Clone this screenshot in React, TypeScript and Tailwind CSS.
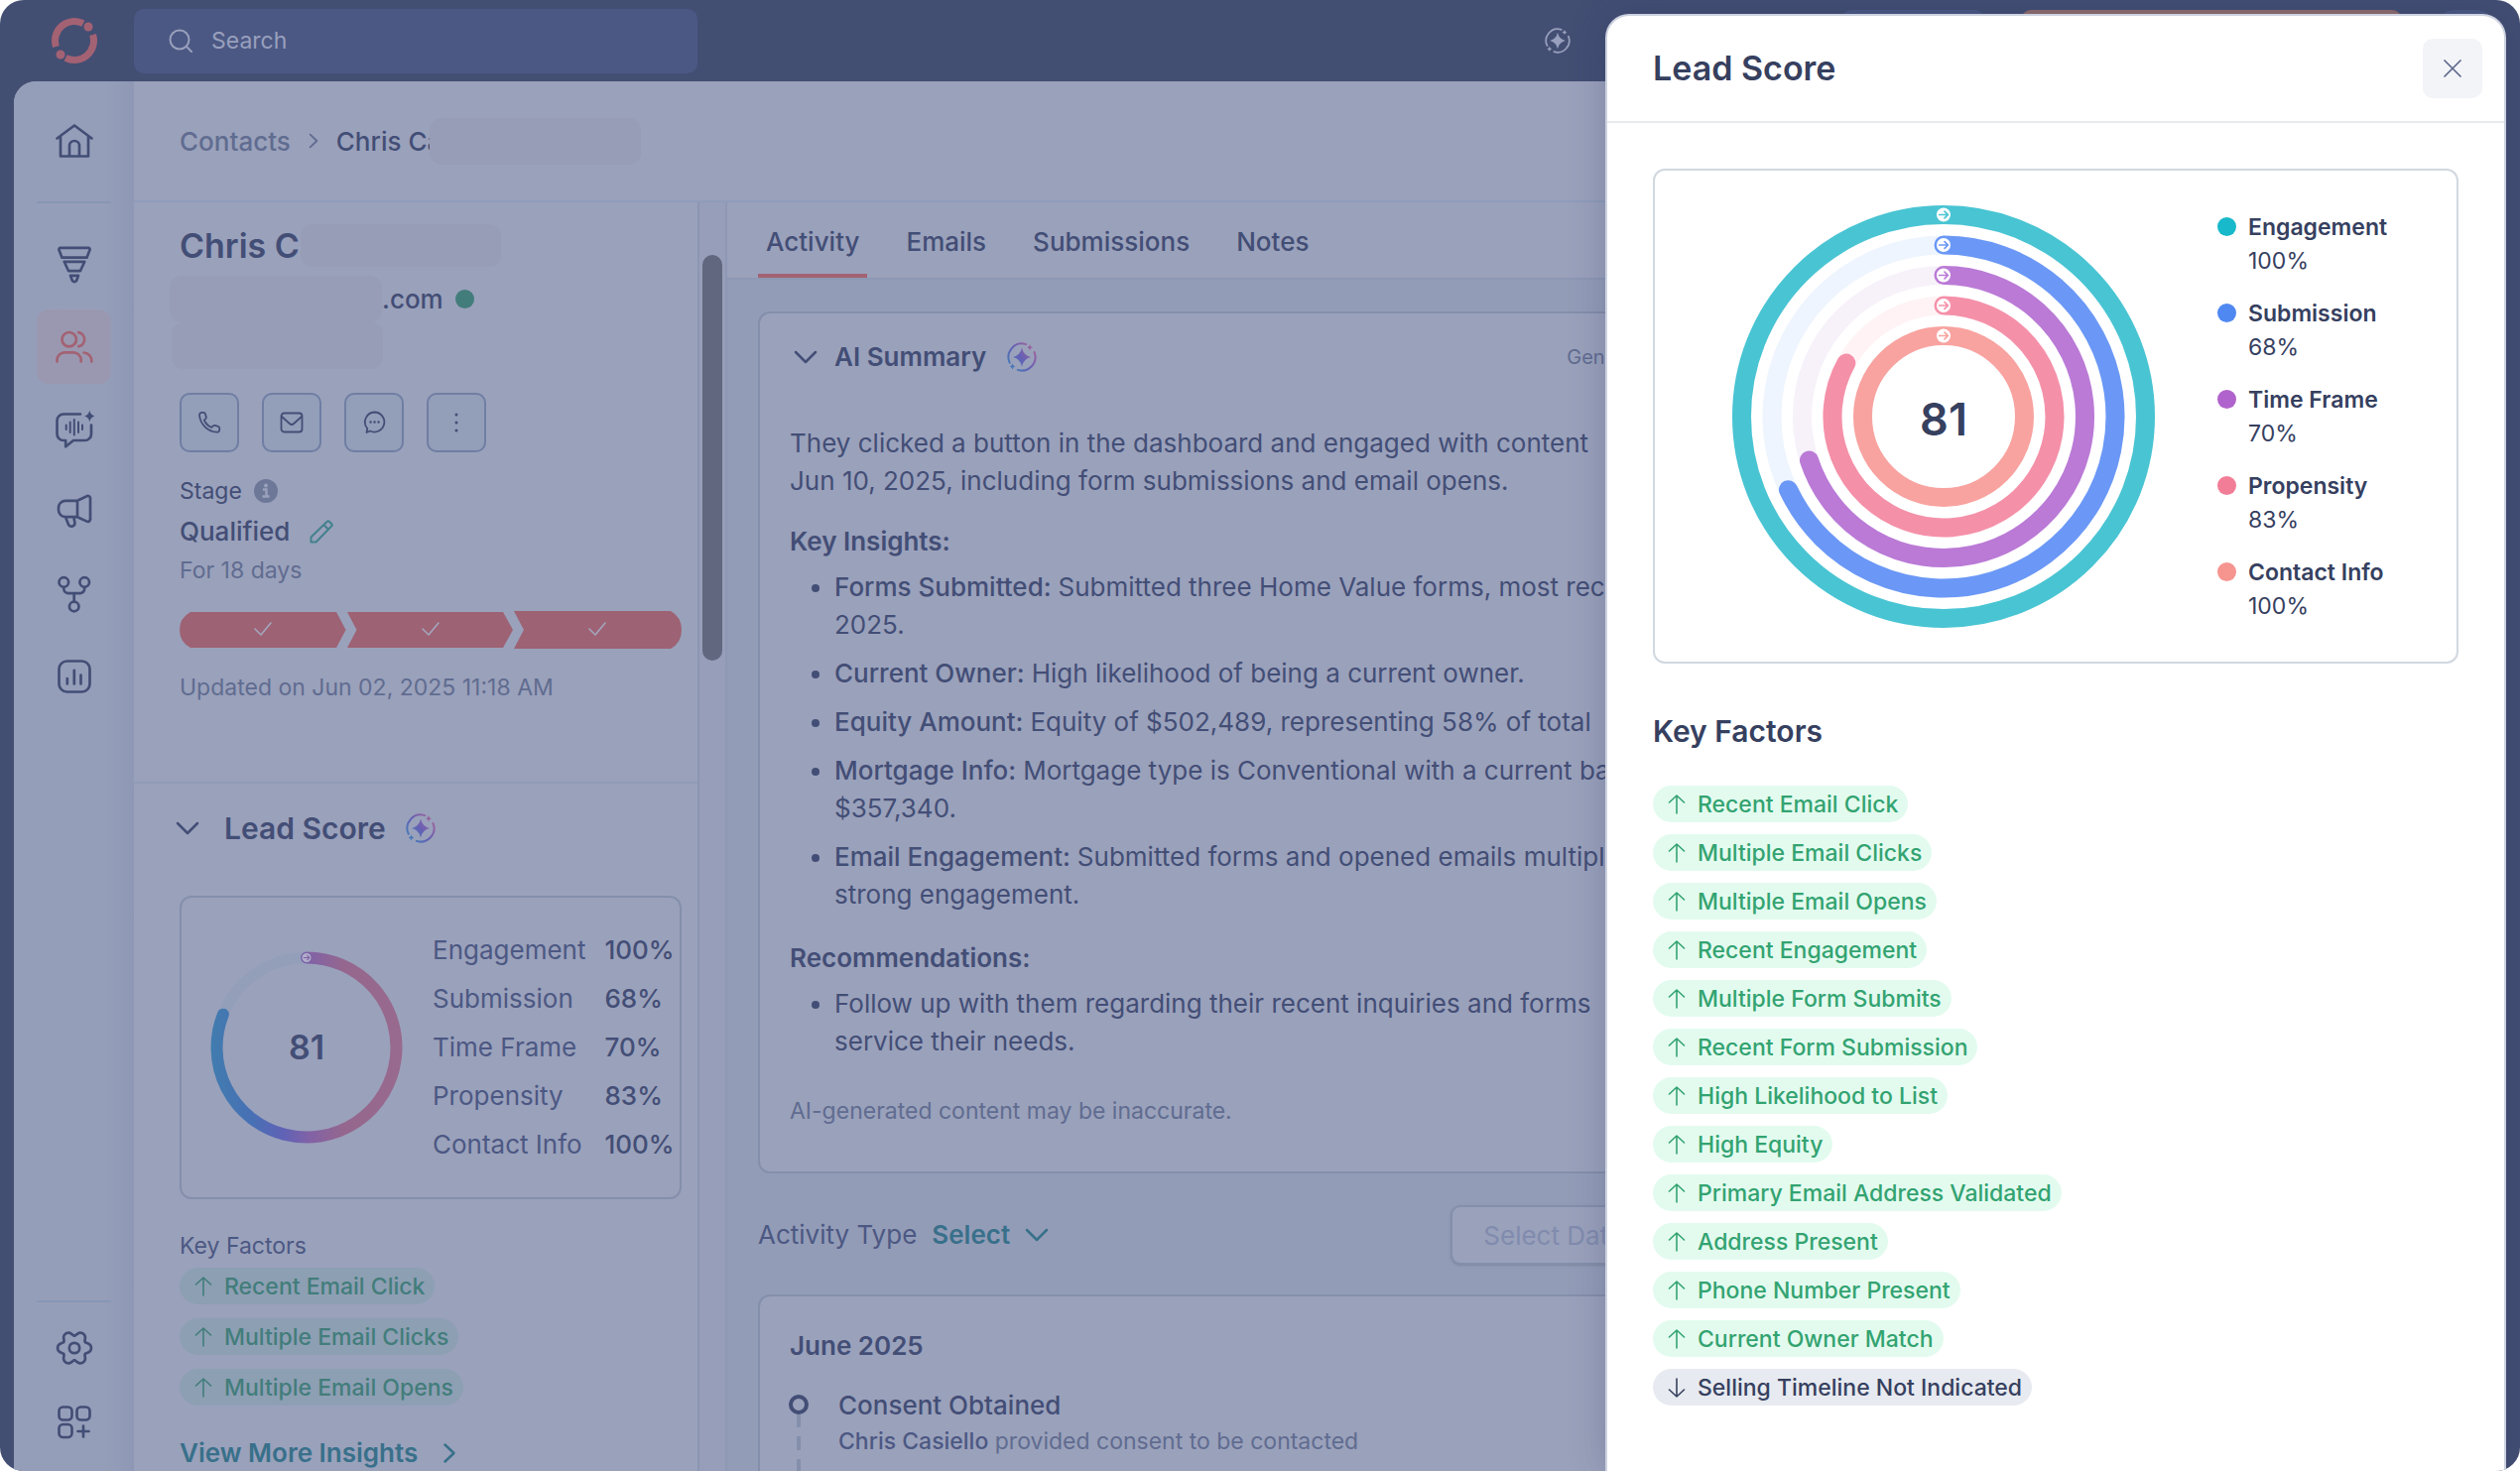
import { ReactNode } from "react";
import clsx from "clsx";

const scores = [
  { label: "Engagement", value: 100, color: "#49c4d3", track: "#e6f8fa", dot: "bg-[#17b9cb]" },
  { label: "Submission", value: 68, color: "#6b98f6", track: "#eff5fe", dot: "bg-[#5088f2]" },
  { label: "Time Frame", value: 70, color: "#ba7ad6", track: "#f7f1fa", dot: "bg-[#b063cc]" },
  { label: "Propensity", value: 83, color: "#f590a9", track: "#fff3f5", dot: "bg-[#f27d97]" },
  { label: "Contact Info", value: 100, color: "#f8a3a0", track: "#fff1f0", dot: "bg-[#f69490]" },
];

const factors = [
  "Recent Email Click",
  "Multiple Email Clicks",
  "Multiple Email Opens",
  "Recent Engagement",
  "Multiple Form Submits",
  "Recent Form Submission",
  "High Likelihood to List",
  "High Equity",
  "Primary Email Address Validated",
  "Address Present",
  "Phone Number Present",
  "Current Owner Match",
];

// Point on a circle, measured clockwise from twelve o'clock.
function polar(c: number, r: number, turn: number) {
  const a = turn * Math.PI * 2;
  return `${(c + r * Math.sin(a)).toFixed(2)} ${(c - r * Math.cos(a)).toFixed(2)}`;
}

function arc(c: number, r: number, from: number, to: number) {
  return `M${polar(c, r, from)}A${r} ${r} 0 ${to - from > 0.5 ? 1 : 0} 1 ${polar(c, r, to)}`;
}

function gearPath() {
  const points = Array.from({ length: 72 }, (_, i) => {
    const a = (i / 72) * Math.PI * 2;
    const r = 15 + 2.3 * Math.cos(6 * a) - 0.4 * Math.cos(12 * a);
    return `${(20 + r * Math.cos(a)).toFixed(2)} ${(20 + r * Math.sin(a)).toFixed(2)}`;
  });
  return `M${points.join("L")}Z`;
}

function NavIcon({ children }: { children: ReactNode }) {
  return (
    <svg
      viewBox="0 0 40 40"
      className="size-10"
      fill="none"
      stroke="currentColor"
      strokeWidth={2.7}
      strokeLinecap="round"
      strokeLinejoin="round"
    >
      {children}
    </svg>
  );
}

const navIcons = {
  home: (
    <NavIcon>
      <path d="M2.5 17.5 20 4.5l17.5 13M6 15.5v20h28v-20M15 35V25a5 5 0 0 1 10 0v10" />
    </NavIcon>
  ),
  funnel: (
    <NavIcon>
      <path d="M6 2.8h28a1.6 1.6 0 0 1 1.5 2.2l-3 7.7h-25l-3-7.700A1.600 1.600 0 0 1 6 2.800zM9.700 16.800h20.600l-4.400 9.400H14.100zM16 30.800h8l-1.800 5q-2.200 2.600-4.400 0z" />
    </NavIcon>
  ),
  users: (
    <NavIcon>
      <circle cx="14.7" cy="12.2" r="7.2" />
      <path d="M24.2 5.2a7.1 7.1 0 0 1 0 14M2.5 34.5V33a7.6 7.6 0 0 1 7.6-7.6h9A7.6 7.6 0 0 1 26.7 33v1.5M29.6 25.5a8.2 8.2 0 0 1 7.7 9" />
    </NavIcon>
  ),
  assistant: (
    <NavIcon>
      <path d="M26 4.5H9A6.5 6.5 0 0 0 2.500 11v13.500A6.500 6.500 0 0 0 9 31h2.200v6.300l7.800-6.300h11.500a6.500 6.500 0 0 0 6.500-6.500V15.500" />
      <path d="M11.7 15.5v4.5M15.7 12.5v10.5M19.8 10v15.500M24 12.500v10.500M28 15.500v4.500" strokeWidth="2" />
      <path d="M35.300.8q1 4.700 5.200 5.700-4.200 1-5.200 5.700-1-4.700-5.200-5.700 4.200-1 5.200-5.700z" fill="currentColor" stroke="none" />
    </NavIcon>
  ),
  campaigns: (
    <NavIcon>
      <path d="M23 8.800H11a7 7 0 0 0-7 7v2.400a7 7 0 0 0 7 7h12zM23 8.800l9.500-4.600A2.400 2.400 0 0 1 36 6.400v21a2.400 2.400 0 0 1-3.500 2.200L23 25.200M11 25.200l3.200 8a3.400 3.400 0 0 0 6.200-2.200l-1-5.500" />
    </NavIcon>
  ),
  workflows: (
    <NavIcon>
      <circle cx="9.3" cy="8" r="4.8" />
      <circle cx="30.2" cy="8" r="4.8" />
      <circle cx="19.7" cy="32.5" r="4.8" />
      <path d="M9.300 13v1.500a4.600 4.600 0 0 0 4.600 4.600h11.700a4.600 4.600 0 0 0 4.600-4.600V13M19.700 19.100v8.500" />
    </NavIcon>
  ),
  reports: (
    <NavIcon>
      <rect x="4.5" y="4.5" width="31" height="31" rx="8" />
      <path d="M12.800 22v5.500M19.800 13.800v13.700M26.500 18.500v9" />
    </NavIcon>
  ),
  settings: (
    <NavIcon>
      <path d={gearPath()} />
      <circle cx="20" cy="20" r="5.2" />
    </NavIcon>
  ),
  apps: (
    <NavIcon>
      <rect x="4.5" y="4.5" width="13" height="13" rx="4" />
      <rect x="22.5" y="4.5" width="13" height="13" rx="4" />
      <rect x="4.5" y="22" width="13" height="13" rx="4" />
      <path d="M29 23.500v11M23.500 29h11" />
    </NavIcon>
  ),
};

function SparkIcon({ id, mono }: { id: string; mono?: boolean }) {
  const paint = mono ? "#98a0bd" : `url(#${id})`;
  return (
    <svg viewBox="0 0 30 30" className={mono ? "size-[26px]" : "size-[30px]"} fill="none">
      <defs>
        <linearGradient id={id} gradientUnits="userSpaceOnUse" x1="2" y1="26" x2="27" y2="5">
          <stop offset="0" stopColor="#417fb8" />
          <stop offset="0.5" stopColor="#6560b5" />
          <stop offset="1" stopColor="#a0659a" />
        </linearGradient>
      </defs>
      <path d={arc(15, 13.5, 0.68, 1.05)} stroke={paint} strokeWidth="2" strokeLinecap="round" />
      <path d={arc(15, 13.5, 0.19, 0.55)} stroke={paint} strokeWidth="2" strokeLinecap="round" />
      <path d="M15 5.500q1.500 7.500 9 9.500-7.500 2-9 9.500-1.500-7.500-9-9.500 7.500-2 9-9.500z" fill={paint} />
      <path d="M23 2.200q.6 2.400 2.800 3-2.200.6-2.800 3-.6-2.400-2.800-3 2.200-.6 2.800-3zM5.500 21.500q.6 2.400 2.800 3-2.200.6-2.800 3-.6-2.400-2.800-3 2.200-.6 2.800-3z" fill={paint} />
    </svg>
  );
}

function Chevron({ className, right }: { className?: string; right?: boolean }) {
  return (
    <svg
      viewBox="0 0 24 24"
      className={clsx("size-6", className)}
      fill="none"
      stroke="currentColor"
      strokeWidth="2.5"
      strokeLinecap="round"
      strokeLinejoin="round"
    >
      <path d={right ? "M7.500 3.500 16.500 12l-9 8.500" : "M2 7l10 10L22 7"} />
    </svg>
  );
}

function NavItem({ label, active, children }: { label: string; active?: boolean; children: ReactNode }) {
  return (
    <a
      href="#"
      aria-label={label}
      className={clsx(
        "flex size-[75px] items-center justify-center rounded-xl",
        active ? "bg-[#9a98b0] text-[#a36273]" : "text-[#434e76]"
      )}
    >
      {children}
    </a>
  );
}

function Sidebar() {
  return (
    <nav className="flex w-[121px] shrink-0 flex-col items-center bg-gradient-to-r from-[#959eb9] from-75% to-[#8e98b4] pt-[22px] pb-3">
      <NavItem label="Home">{navIcons.home}</NavItem>
      <div className="my-6 h-0.5 w-[75px] bg-[#8796b5]" />
      <div className="flex flex-col gap-2">
        <NavItem label="Pipeline">{navIcons.funnel}</NavItem>
        <NavItem label="Contacts" active>{navIcons.users}</NavItem>
        <NavItem label="Assistant">{navIcons.assistant}</NavItem>
        <NavItem label="Campaigns">{navIcons.campaigns}</NavItem>
        <NavItem label="Workflows">{navIcons.workflows}</NavItem>
        <NavItem label="Reports">{navIcons.reports}</NavItem>
      </div>
      <div className="mt-auto h-0.5 w-[75px] bg-[#8796b5]" />
      <div className="mt-2 flex flex-col">
        <NavItem label="Settings">{navIcons.settings}</NavItem>
        <NavItem label="Apps">{navIcons.apps}</NavItem>
      </div>
    </nav>
  );
}

function TopBar() {
  return (
    <header className="relative flex h-[82px] shrink-0 items-center">
      <div className="flex w-[135px] justify-center pl-[15px]">
        <svg viewBox="0 0 48 48" className="size-12" fill="none" stroke="#a36273" strokeWidth="7">
          <path d={arc(24, 19.5, 0.7, 1.075)} />
          <path d={arc(24, 19.5, 0.2, 0.575)} />
          <circle cx="38" cy="10" r="4.5" fill="#a36273" stroke="none" />
          <circle cx="10" cy="38" r="4.5" fill="#a36273" stroke="none" />
        </svg>
      </div>
      <label className="flex h-[65px] w-[568px] items-center gap-[19px] rounded-[10px] bg-[#4c5884] pl-[35px]">
        <svg viewBox="0 0 24 24" className="size-6" fill="none" stroke="#98a0bd" strokeWidth="2" strokeLinecap="round">
          <circle cx="11" cy="11" r="9.5" />
          <path d="m18 18 5 5" />
        </svg>
        <input
          type="search"
          placeholder="Search"
          className="w-96 bg-transparent text-[23px] leading-[30px] outline-none placeholder:text-[#98a0bd]"
        />
      </label>
      <div className="mr-[957px] ml-auto">
        <SparkIcon id="spark-top" mono />
      </div>
      <div className="absolute top-2.5 right-[540px] h-14 w-36 rounded-[10px] bg-[#4c5884]" />
      <div className="absolute top-2.5 right-[119px] h-14 w-[384px] rounded-[10px] bg-[#926d6c]" />
      <div className="absolute top-2.5 right-6 h-14 w-[62px] rounded-[20px] bg-[#4c5884]" />
    </header>
  );
}

function Pill({ children, down, muted }: { children: ReactNode; down?: boolean; muted?: boolean }) {
  return (
    <li
      className={clsx(
        "flex h-[37px] items-center rounded-full pr-2.5 pl-3.5 text-[23px] leading-[30px] font-medium",
        muted && "bg-[#8d9fb3] text-[#427d7b]",
        !muted && !down && "bg-[#e3fbef] text-[#33a371]",
        down && "bg-[#e7eaf0] text-[#36405f]"
      )}
    >
      <svg
        viewBox="0 0 20 20"
        className="mr-[11px] size-5"
        fill="none"
        stroke="currentColor"
        strokeWidth="1.6"
        strokeLinecap="round"
        strokeLinejoin="round"
      >
        <path d={down ? "M10 1v18M2.500 12 10 19l7.500-7" : "M10 19V1M2.500 8 10 1l7.500 7"} />
      </svg>
      {children}
    </li>
  );
}

function ActionButton({ label, children }: { label: string; children: ReactNode }) {
  return (
    <button
      aria-label={label}
      className="flex size-[60px] items-center justify-center rounded-[10px] border-2 border-[#6f7ea3] bg-[#939eb9] text-[#434e76]"
    >
      <svg
        viewBox="0 0 24 24"
        className="size-6"
        fill="none"
        stroke="currentColor"
        strokeWidth="1.8"
        strokeLinecap="round"
        strokeLinejoin="round"
      >
        {children}
      </svg>
    </button>
  );
}

function StageProgress() {
  return (
    <svg viewBox="0 0 506 38" className="mt-[26px] w-full">
      <g fill="#9d6273">
        <path d="M11 1h147l9.500 18-9.500 18H11Q0 31 0 19T11 1z" />
        <path d="M169 1h157l10 18-10 18H169l9.500-18z" />
        <path d="M337 0h158q11 6 11 19t-11 19H337l10-19z" />
      </g>
      <g fill="none" stroke="#a4a6bf" strokeWidth="1.6" strokeLinecap="round" strokeLinejoin="round">
        <path d="m76 18 6 6 10-12" />
        <path d="m245 18 6 6 10-12" />
        <path d="m413 18 6 6 10-12" />
      </g>
    </svg>
  );
}

function StartBadge({ x, y, r, color, fill }: { x: number; y: number; r: number; color: string; fill: string }) {
  const s = r / 7;
  return (
    <g transform={`translate(${x} ${y}) scale(${s})`}>
      <circle r="7" fill={fill} />
      <path
        d="M-4.300 0h8.600M1-3.300 4.500 0 1 3.300"
        fill="none"
        stroke={color}
        strokeWidth="1.7"
        strokeLinecap="round"
        strokeLinejoin="round"
      />
    </g>
  );
}

function ScoreRing() {
  return (
    <svg viewBox="0 0 194 194" className="size-[194px]" fill="none">
      <defs>
        <linearGradient id="score" gradientUnits="userSpaceOnUse" x1="0" y1="0" x2="194" y2="0">
          <stop offset="0" stopColor="#417cae" />
          <stop offset="0.22" stopColor="#4870b5" />
          <stop offset="0.38" stopColor="#6062b6" />
          <stop offset="0.52" stopColor="#8262a5" />
          <stop offset="0.7" stopColor="#95678e" />
          <stop offset="1" stopColor="#986a8e" />
        </linearGradient>
      </defs>
      <circle cx="97" cy="97" r="90.5" stroke="#939fb9" strokeWidth="11" />
      <path d={arc(97, 90.5, 0, 0.81)} stroke="url(#score)" strokeWidth="12" strokeLinecap="round" />
      <StartBadge x={97} y={6.5} r={4.5} color="#8262a5" fill="#b0aecb" />
      <text x="97" y="109" textAnchor="middle" fill="#434e76" className="text-[34px] font-semibold">
        81
      </text>
    </svg>
  );
}

function ContactPanel() {
  return (
    <section className="w-[568px] shrink-0">
      <div className="border-b-2 border-[#919ab7] pt-[22px] pr-4 pb-20 pl-[46px]">
        <div className="flex items-center">
          <h1 className="text-[34px] leading-[42px] font-semibold text-[#434e76]">Chris Ca</h1>
          <div className="relative -ml-[18px] h-[43px] w-[202px] rounded-xl bg-[#979db7]" />
        </div>
        <div className="mt-[9px] -ml-2.5 flex h-[47px] items-center text-[26px] font-medium text-[#434e76]">
          <div className="h-full w-[214px] rounded-xl bg-[#979db7]" />
          .com
          <span className="ml-3 size-[19px] rounded-full bg-[#427d7b]" />
        </div>
        <div className="-ml-2 h-[47px] w-[213px] rounded-xl bg-[#979db7]" />
        <div className="mt-6 flex gap-[23px]">
          <ActionButton label="Call">
            <path d="M2 4.500C2 3 3 1.800 4.500 1.800h1.600c.8 0 1.500.5 1.700 1.300l1 3.200c.2.700 0 1.400-.5 1.900L6.800 9.600a14 14 0 0 0 7.500 7.300l1.500-1.500c.5-.5 1.200-.7 1.900-.5l3.200 1c.8.2 1.300.9 1.300 1.700v1.600c0 1.500-1.200 2.600-2.700 2.500A19 19 0 0 1 2 4.500z" />
          </ActionButton>
          <ActionButton label="Email">
            <rect x="1.5" y="2.5" width="21" height="19" rx="3" />
            <path d="m2 6 7.800 7a3.300 3.300 0 0 0 4.400 0L22 6" />
          </ActionButton>
          <ActionButton label="Message">
            <path d="M12.500 1.500a10 10 0 1 1-4.500 19L4.500 22l.8-4A10 10 0 0 1 12.500 1.500z" />
            <path d="M8.500 11.500h.1M12.500 11.500h.1M16.500 11.500h.1" strokeWidth="2.4" />
          </ActionButton>
          <ActionButton label="More">
            <path d="M12 4v.1M12 12v.1M12 20v.1" strokeWidth="3" />
          </ActionButton>
        </div>
        <div className="mt-6 flex items-center gap-3 text-[23px] leading-[30px] text-[#434e76]">
          Stage
          <svg viewBox="0 0 24 24" className="size-6">
            <circle cx="12" cy="12" r="12" fill="#6d7899" />
            <circle cx="12" cy="6.5" r="1.9" fill="#9aa1bb" />
            <path d="M9 10.500H12.500V17.500M8.500 17.500h7" fill="none" stroke="#9aa1bb" strokeWidth="2.4" />
          </svg>
        </div>
        <div className="mt-[7px] flex items-center gap-5 text-[26px] leading-[38px] font-medium text-[#434e76]">
          Qualified
          <button aria-label="Edit stage" className="text-[#42818d]">
            <svg viewBox="0 0 24 24" className="size-6" fill="none" stroke="currentColor" strokeWidth="2" strokeLinejoin="round">
              <path d="M1.500 22.500v-5L17.800 1.800q1-1 2 0l2.500 2.500q1 1 0 2L6.500 22.500zM14.500 5.200l4.500 4.500" />
            </svg>
          </button>
        </div>
        <p className="mt-[5px] text-[23px] leading-[30px] text-[#606c90]">For 18 days</p>
        <StageProgress />
        <p className="mt-6 text-[23px] leading-[30px] text-[#606c90]">Updated on Jun 02, 2025 11:18 AM</p>
      </div>
      <div className="pt-[25px] pr-4 pl-[46px]">
        <h2 className="-ml-1 flex h-10 items-center text-[30px] font-semibold text-[#434e76]">
          <Chevron className="mr-[25px]" />
          Lead Score
          <span className="ml-5">
            <SparkIcon id="spark-score" />
          </span>
        </h2>
        <div className="mt-12 flex h-[306px] items-center rounded-xl border-2 border-[#848fab] pl-[29px]">
          <ScoreRing />
          <dl className="ml-[30px] grid grid-cols-[auto_auto] gap-x-[19px] gap-y-[11px] text-[26px] leading-[38px]">
            {scores.map(({ label, value }) => (
              <div key={label} className="contents">
                <dt className="whitespace-nowrap text-[#4c5883]">{label}</dt>
                <dd className="font-medium text-[#434e76]">{value}%</dd>
              </div>
            ))}
          </dl>
        </div>
        <h3 className="mt-8 text-[23px] leading-[30px] text-[#4c5883]">Key Factors</h3>
        <ul className="mt-[7px] flex flex-col items-start gap-3.5">
          {factors.slice(0, 3).map((factor) => (
            <Pill key={factor} muted>
              {factor}
            </Pill>
          ))}
        </ul>
        <a href="#" className="mt-[29px] flex items-center gap-5 text-[26px] leading-[38px] font-semibold text-[#38708a]">
          View More Insights
          <Chevron right />
        </a>
      </div>
    </section>
  );
}

function Tab({ active, children }: { active?: boolean; children: ReactNode }) {
  return (
    <button
      role="tab"
      aria-selected={active}
      className={clsx("border-b-4 px-2 pt-1.5", active ? "border-[#a36273]" : "border-transparent")}
    >
      {children}
    </button>
  );
}

function Insight({ title, children }: { title?: string; children: ReactNode }) {
  return (
    <li>
      {title && <strong className="font-medium">{title}: </strong>}
      {children}
    </li>
  );
}

function ActivityPanel() {
  return (
    <main className="min-w-0 flex-1 overflow-hidden border-l-2 border-[#8e98b4] bg-[#939cb7] whitespace-nowrap text-[#434e76]">
      <div role="tablist" className="flex h-[78px] gap-[31px] border-b-2 border-[#8d98b4] bg-[#9aa1bb] pl-[31px] text-[26px] font-medium">
        <Tab active>Activity</Tab>
        <Tab>Emails</Tab>
        <Tab>Submissions</Tab>
        <Tab>Notes</Tab>
      </div>
      <div className="px-[31px] pt-8 text-[26px] leading-[38px]">
        <article className="rounded-xl border-2 border-[#848fab] bg-[#9aa1bb] px-[30px] pt-6 pb-[46px]">
          <div className="flex h-10 items-center">
            <Chevron className="mr-[17px] ml-1" />
            <h2 className="font-semibold">AI Summary</h2>
            <span className="ml-[21px]">
              <SparkIcon id="spark-summary" />
            </span>
            <span className="ml-[534px] text-[20px] text-[#606c90]">Generated</span>
          </div>
          <p className="mt-12">
            They clicked a button in the dashboard and engaged with content
            <br />
            Jun 10, 2025, including form submissions and email opens.
          </p>
          <h3 className="mt-[23px] font-semibold">Key Insights:</h3>
          <ul className="mt-2 flex list-disc flex-col gap-[11px] pl-[45px]">
            <Insight title="Forms Submitted">
              Submitted three Home Value forms, most recent
              <br />
              2025.
            </Insight>
            <Insight title="Current Owner">High likelihood of being a current owner.</Insight>
            <Insight title="Equity Amount">Equity of $502,489, representing 58% of total</Insight>
            <Insight title="Mortgage Info">
              Mortgage type is Conventional with a current balance
              <br />
              $357,340.
            </Insight>
            <Insight title="Email Engagement">
              Submitted forms and opened emails multiple
              <br />
              strong engagement.
            </Insight>
          </ul>
          <h3 className="mt-[26px] font-semibold">Recommendations:</h3>
          <ul className="mt-2 list-disc pl-[45px]">
            <Insight>
              Follow up with them regarding their recent inquiries and forms
              <br />
              service their needs.
            </Insight>
          </ul>
          <p className="mt-9 text-[23px] leading-[30px] text-[#606c90]">AI-generated content may be inaccurate.</p>
        </article>
        <div className="mt-8 flex h-[60px] items-center">
          <label htmlFor="activity-type" className="text-[#4c5883]">
            Activity Type
          </label>
          <div className="relative ml-[15px] flex items-center text-[#38708a]">
            <select id="activity-type" className="w-[122px] appearance-none bg-transparent font-semibold outline-none">
              <option>Select</option>
            </select>
            <Chevron className="pointer-events-none absolute right-1 size-5" />
          </div>
          <input
            aria-label="Select Date"
            placeholder="Select Date"
            className="ml-[401px] h-[60px] w-96 rounded-[10px] border-2 border-[#848fab] bg-[#9aa1bb] pl-[31px] shadow-sm outline-none placeholder:text-[#808bad]"
          />
        </div>
        <article className="mt-[30px] rounded-xl border-2 border-[#848fab] bg-[#9aa1bb] px-[30px] pt-[31px] pb-9">
          <h2 className="font-semibold">June 2025</h2>
          <div className="mt-[22px] flex gap-[31px]">
            <div className="flex w-[18px] shrink-0 flex-col items-center pt-2">
              <span className="size-5 shrink-0 rounded-full border-4 border-[#434e76]" />
              <svg viewBox="0 0 4 70" className="h-[70px] w-1" stroke="#848fab" strokeWidth="4" strokeDasharray="14 9">
                <path d="M2-1v71" />
              </svg>
            </div>
            <div>
              <h3 className="font-medium">Consent Obtained</h3>
              <p className="text-[23px] leading-[34px] text-[#606c90]">
                <span className="font-medium text-[#4c5883]">Chris Casiello</span> provided consent to be contacted
              </p>
            </div>
          </div>
        </article>
      </div>
    </main>
  );
}

function ScoreChart() {
  return (
    <svg viewBox="0 0 426 426" className="size-[426px] shrink-0" fill="none">
      {scores.map(({ label, value, color, track }, i) => {
        const r = 203.5 - i * 30.5;
        return (
          <g key={label} strokeWidth="19">
            <circle cx="213" cy="213" r={r} stroke={value === 100 ? color : track} />
            {value < 100 && <path d={arc(213, r, 0, value / 100)} stroke={color} strokeLinecap="round" />}
            <StartBadge x={213} y={213 - r} r={7} color={color} fill="#fff" />
          </g>
        );
      })}
      <text x="213" y="232" textAnchor="middle" fill="#36405f" className="text-[45px] font-semibold">
        81
      </text>
    </svg>
  );
}

function LeadScoreDrawer() {
  return (
    <aside
      role="dialog"
      aria-label="Lead Score"
      className="absolute top-3.5 right-3.5 bottom-0 flex w-[908px] flex-col rounded-t-[24px] border-2 border-b-0 border-[#cdd2e0] bg-white text-[#36405f] shadow-[0_0_36px_rgba(40,50,95,0.25)]"
    >
      <div className="flex h-[108px] shrink-0 items-center justify-between border-b-2 border-[#e7ebf0] pr-[22px] pl-[46px]">
        <h2 className="text-[34px] leading-[42px] font-semibold">Lead Score</h2>
        <button aria-label="Close" className="flex size-[60px] items-center justify-center rounded-[10px] bg-[#f3f4f8]">
          <svg viewBox="0 0 18 18" className="size-[18px]" stroke="#5c678c" strokeWidth="1.7" strokeLinecap="round">
            <path d="m1 1 16 16M17 1 1 17" />
          </svg>
        </button>
      </div>
      <div className="px-[46px] pt-[46px]">
        <div className="flex h-[499px] items-center rounded-xl border-2 border-[#d1d8e0] pl-[78px]">
          <ScoreChart />
          <ul className="ml-[63px] flex flex-col gap-[19px] text-[23px] leading-[34px]">
            {scores.map(({ label, value, dot }) => (
              <li key={label} className="grid grid-cols-[19px_auto] items-center gap-x-3">
                <span className={clsx("size-[19px] rounded-full", dot)} />
                <span className="font-semibold">{label}</span>
                <span className="col-start-2">{value}%</span>
              </li>
            ))}
          </ul>
        </div>
        <h3 className="mt-12 text-[30px] leading-10 font-semibold">Key Factors</h3>
        <ul className="mt-[35px] flex flex-col items-start gap-3">
          {factors.map((factor) => (
            <Pill key={factor}>{factor}</Pill>
          ))}
          <Pill down>Selling Timeline Not Indicated</Pill>
        </ul>
      </div>
    </aside>
  );
}

export default function App() {
  return (
    <div className="h-screen bg-white font-['Inter',sans-serif]">
      <div className="relative flex h-full flex-col overflow-hidden rounded-[24px] bg-[#434e73]">
        <TopBar />
        <div className="mx-3.5 flex min-h-0 flex-1 overflow-hidden rounded-t-[22px] bg-[#9aa1bb]">
          <Sidebar />
          <div className="flex min-w-0 flex-1 flex-col">
            <nav className="flex h-[122px] shrink-0 items-center border-b-2 border-[#8f9cba] pl-[46px] text-[26px] font-medium">
              <a href="#" className="text-[#606c90]">
                Contacts
              </a>
              <Chevron right className="mx-3.5 size-[18px] text-[#606c90]" />
              <span className="text-[#434e76]">Chris Ca</span>
              <div className="relative -ml-3 h-[47px] w-[213px] rounded-xl bg-[#979db7]" />
            </nav>
            <div className="flex min-h-0 flex-1">
              <ContactPanel />
              <div className="w-7 shrink-0 border-l-2 border-[#8c96b2] bg-[#979eb9] pt-[53px] pl-[3px]">
                <div className="h-[409px] w-5 rounded-full bg-[#61677f]" />
              </div>
              <ActivityPanel />
            </div>
          </div>
        </div>
        <LeadScoreDrawer />
      </div>
    </div>
  );
}
